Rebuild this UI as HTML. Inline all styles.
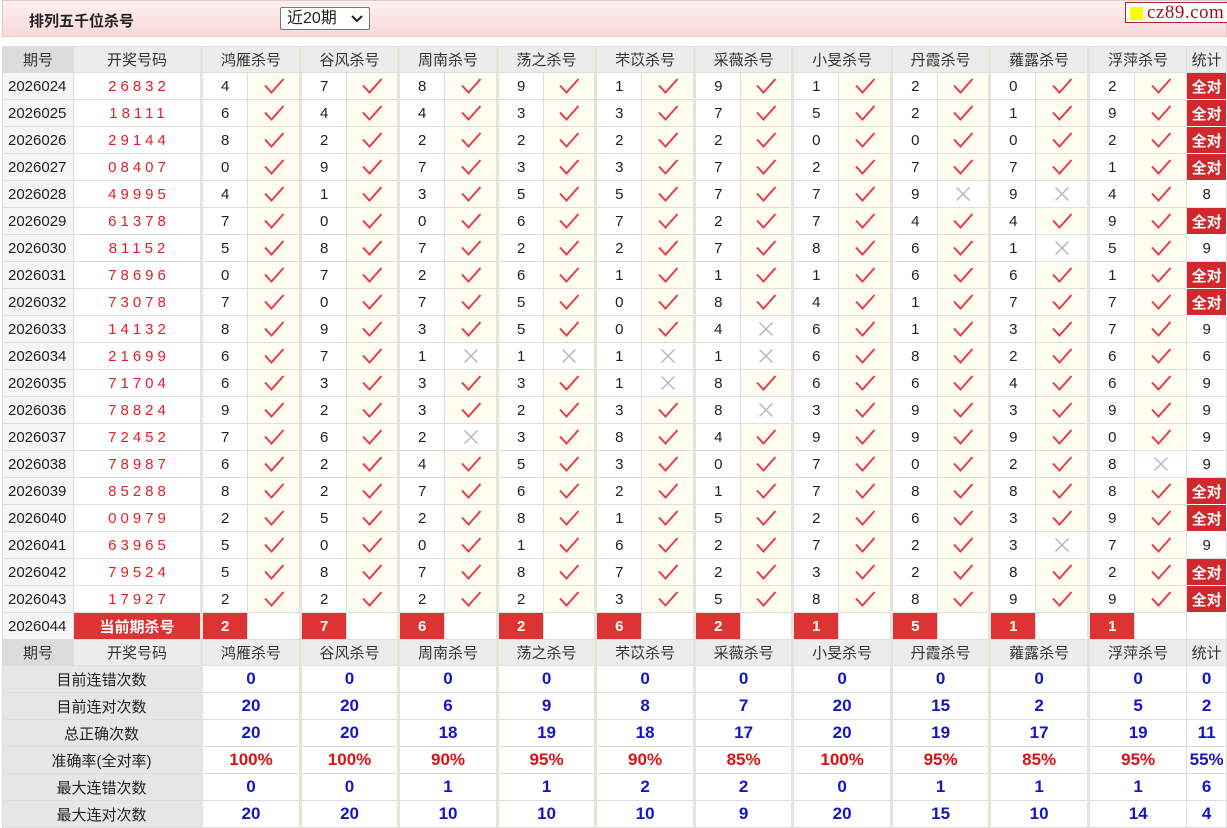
<!DOCTYPE html>
<html><head><meta charset="utf-8"><style>
*{margin:0;padding:0;box-sizing:border-box}
body{width:1227px;height:828px;overflow:hidden;background:#fff;font-family:"Liberation Sans","Noto Sans CJK SC",sans-serif;font-size:15px;color:#222}
.top{position:absolute;left:2px;top:0;width:1225px;height:37px;background:linear-gradient(#fdf0f0,#f8d9d9);border:1px solid #e3caca}
.tt{position:absolute;left:26px;top:9px;font-weight:bold;font-size:15px;color:#222}
.sel{position:absolute;left:277px;top:6px;width:90px;height:23px;background:#fff;border:1px solid #777;border-radius:2px;font-size:16px;padding-left:6px;line-height:21px}
.sel svg{position:absolute;right:6px;top:7px}
.logo{position:absolute;left:1122px;top:1px;width:103px;height:21px;background:#fff;border:1px solid #b3262e;font-family:"Liberation Serif",serif;font-size:19px;color:#a0101c;line-height:19px;padding-left:21px;letter-spacing:0.5px}
.logo:before{content:"";position:absolute;left:4px;top:4px;width:13px;height:13px;background:#ff0}
table{position:absolute;left:2px;top:46px;border-collapse:collapse;table-layout:fixed;width:1225px}
td{border:1px solid #dedede;text-align:center;height:27px;padding:0;white-space:nowrap;overflow:hidden}
tr.h td{background:#ececec;color:#333;height:26px}
tr.h td.a{background:#dcdcdc}
td.a{background:#f5f5f5;text-align:left;padding-left:5px}
tr.h td.a{text-align:center;padding:0}
td.k{color:#e0202a;letter-spacing:4px;padding-left:4px}
td.n{border-left:3px solid #e4e4dc;text-align:left;padding-left:18px}
tr.h td.g{border-left:3px solid #e4e4dc}
td.o{background:#fffdf0}
td.o svg,td.x svg{display:block;margin:0 auto}
td.q{background:#d0282c;color:#fff;font-weight:bold;border:1px solid #fff;font-size:15px}
td.cur{background:#d33;color:#fff;font-weight:bold}
td.r{background:#d33;color:#fff;font-weight:bold;text-align:left;padding-left:18px;border-left:3px solid #e4e4dc}
td.s{background:#e6e6e6;color:#222}
td.v{border-left:3px solid #e4e4dc;color:#1515c8;font-weight:bold;font-size:17px}
td.p{color:#e01010}
td.lv{color:#1515c8;font-weight:bold;font-size:17px}
</style></head><body>
<svg width="0" height="0" style="position:absolute"><defs>
<symbol id="k" viewBox="0 0 22 18"><path d="M2 8.5 L8.5 15.5 L20.5 2" fill="none" stroke="#e63c4c" stroke-width="2" stroke-linejoin="miter"/></symbol>
<symbol id="c" viewBox="0 0 16 16"><path d="M1.5 1.5 L14.5 14.5 M14.5 1.5 L1.5 14.5" fill="none" stroke="#b8b8b8" stroke-width="1.5"/></symbol>
</defs></svg>
<div class="top"><div class="tt">排列五千位杀号</div>
<div class="sel">近20期<svg width="12" height="8" viewBox="0 0 12 8"><path d="M1 1 L6 6 L11 1" fill="none" stroke="#222" stroke-width="2"/></svg></div>
<div class="logo">cz89.com</div></div>
<table>
<colgroup><col style="width:71px"><col style="width:128px">
<col style="width:46px"><col style="width:53px"><col style="width:46px"><col style="width:52px"><col style="width:46px"><col style="width:53px"><col style="width:46px"><col style="width:52px"><col style="width:46px"><col style="width:53px"><col style="width:46px"><col style="width:52px"><col style="width:46px"><col style="width:53px"><col style="width:46px"><col style="width:52px"><col style="width:46px"><col style="width:53px"><col style="width:46px"><col style="width:52px">
<col style="width:40px"></colgroup>
<tr class="h"><td class="a">期号</td><td>开奖号码</td><td class="g" colspan="2">鸿雁杀号</td><td class="g" colspan="2">谷风杀号</td><td class="g" colspan="2">周南杀号</td><td class="g" colspan="2">荡之杀号</td><td class="g" colspan="2">芣苡杀号</td><td class="g" colspan="2">采薇杀号</td><td class="g" colspan="2">小旻杀号</td><td class="g" colspan="2">丹霞杀号</td><td class="g" colspan="2">蕹露杀号</td><td class="g" colspan="2">浮萍杀号</td><td>统计</td></tr>
<tr><td class="a">2026024</td><td class="k">26832</td><td class="n">4</td><td class="o"><svg width="22" height="18"><use href="#k"/></svg></td><td class="n">7</td><td class="o"><svg width="22" height="18"><use href="#k"/></svg></td><td class="n">8</td><td class="o"><svg width="22" height="18"><use href="#k"/></svg></td><td class="n">9</td><td class="o"><svg width="22" height="18"><use href="#k"/></svg></td><td class="n">1</td><td class="o"><svg width="22" height="18"><use href="#k"/></svg></td><td class="n">9</td><td class="o"><svg width="22" height="18"><use href="#k"/></svg></td><td class="n">1</td><td class="o"><svg width="22" height="18"><use href="#k"/></svg></td><td class="n">2</td><td class="o"><svg width="22" height="18"><use href="#k"/></svg></td><td class="n">0</td><td class="o"><svg width="22" height="18"><use href="#k"/></svg></td><td class="n">2</td><td class="o"><svg width="22" height="18"><use href="#k"/></svg></td><td class="q">全对</td></tr>
<tr><td class="a">2026025</td><td class="k">18111</td><td class="n">6</td><td class="o"><svg width="22" height="18"><use href="#k"/></svg></td><td class="n">4</td><td class="o"><svg width="22" height="18"><use href="#k"/></svg></td><td class="n">4</td><td class="o"><svg width="22" height="18"><use href="#k"/></svg></td><td class="n">3</td><td class="o"><svg width="22" height="18"><use href="#k"/></svg></td><td class="n">3</td><td class="o"><svg width="22" height="18"><use href="#k"/></svg></td><td class="n">7</td><td class="o"><svg width="22" height="18"><use href="#k"/></svg></td><td class="n">5</td><td class="o"><svg width="22" height="18"><use href="#k"/></svg></td><td class="n">2</td><td class="o"><svg width="22" height="18"><use href="#k"/></svg></td><td class="n">1</td><td class="o"><svg width="22" height="18"><use href="#k"/></svg></td><td class="n">9</td><td class="o"><svg width="22" height="18"><use href="#k"/></svg></td><td class="q">全对</td></tr>
<tr><td class="a">2026026</td><td class="k">29144</td><td class="n">8</td><td class="o"><svg width="22" height="18"><use href="#k"/></svg></td><td class="n">2</td><td class="o"><svg width="22" height="18"><use href="#k"/></svg></td><td class="n">2</td><td class="o"><svg width="22" height="18"><use href="#k"/></svg></td><td class="n">2</td><td class="o"><svg width="22" height="18"><use href="#k"/></svg></td><td class="n">2</td><td class="o"><svg width="22" height="18"><use href="#k"/></svg></td><td class="n">2</td><td class="o"><svg width="22" height="18"><use href="#k"/></svg></td><td class="n">0</td><td class="o"><svg width="22" height="18"><use href="#k"/></svg></td><td class="n">0</td><td class="o"><svg width="22" height="18"><use href="#k"/></svg></td><td class="n">0</td><td class="o"><svg width="22" height="18"><use href="#k"/></svg></td><td class="n">2</td><td class="o"><svg width="22" height="18"><use href="#k"/></svg></td><td class="q">全对</td></tr>
<tr><td class="a">2026027</td><td class="k">08407</td><td class="n">0</td><td class="o"><svg width="22" height="18"><use href="#k"/></svg></td><td class="n">9</td><td class="o"><svg width="22" height="18"><use href="#k"/></svg></td><td class="n">7</td><td class="o"><svg width="22" height="18"><use href="#k"/></svg></td><td class="n">3</td><td class="o"><svg width="22" height="18"><use href="#k"/></svg></td><td class="n">3</td><td class="o"><svg width="22" height="18"><use href="#k"/></svg></td><td class="n">7</td><td class="o"><svg width="22" height="18"><use href="#k"/></svg></td><td class="n">2</td><td class="o"><svg width="22" height="18"><use href="#k"/></svg></td><td class="n">7</td><td class="o"><svg width="22" height="18"><use href="#k"/></svg></td><td class="n">7</td><td class="o"><svg width="22" height="18"><use href="#k"/></svg></td><td class="n">1</td><td class="o"><svg width="22" height="18"><use href="#k"/></svg></td><td class="q">全对</td></tr>
<tr><td class="a">2026028</td><td class="k">49995</td><td class="n">4</td><td class="o"><svg width="22" height="18"><use href="#k"/></svg></td><td class="n">1</td><td class="o"><svg width="22" height="18"><use href="#k"/></svg></td><td class="n">3</td><td class="o"><svg width="22" height="18"><use href="#k"/></svg></td><td class="n">5</td><td class="o"><svg width="22" height="18"><use href="#k"/></svg></td><td class="n">5</td><td class="o"><svg width="22" height="18"><use href="#k"/></svg></td><td class="n">7</td><td class="o"><svg width="22" height="18"><use href="#k"/></svg></td><td class="n">7</td><td class="o"><svg width="22" height="18"><use href="#k"/></svg></td><td class="n">9</td><td class="x"><svg width="16" height="16"><use href="#c"/></svg></td><td class="n">9</td><td class="x"><svg width="16" height="16"><use href="#c"/></svg></td><td class="n">4</td><td class="o"><svg width="22" height="18"><use href="#k"/></svg></td><td>8</td></tr>
<tr><td class="a">2026029</td><td class="k">61378</td><td class="n">7</td><td class="o"><svg width="22" height="18"><use href="#k"/></svg></td><td class="n">0</td><td class="o"><svg width="22" height="18"><use href="#k"/></svg></td><td class="n">0</td><td class="o"><svg width="22" height="18"><use href="#k"/></svg></td><td class="n">6</td><td class="o"><svg width="22" height="18"><use href="#k"/></svg></td><td class="n">7</td><td class="o"><svg width="22" height="18"><use href="#k"/></svg></td><td class="n">2</td><td class="o"><svg width="22" height="18"><use href="#k"/></svg></td><td class="n">7</td><td class="o"><svg width="22" height="18"><use href="#k"/></svg></td><td class="n">4</td><td class="o"><svg width="22" height="18"><use href="#k"/></svg></td><td class="n">4</td><td class="o"><svg width="22" height="18"><use href="#k"/></svg></td><td class="n">9</td><td class="o"><svg width="22" height="18"><use href="#k"/></svg></td><td class="q">全对</td></tr>
<tr><td class="a">2026030</td><td class="k">81152</td><td class="n">5</td><td class="o"><svg width="22" height="18"><use href="#k"/></svg></td><td class="n">8</td><td class="o"><svg width="22" height="18"><use href="#k"/></svg></td><td class="n">7</td><td class="o"><svg width="22" height="18"><use href="#k"/></svg></td><td class="n">2</td><td class="o"><svg width="22" height="18"><use href="#k"/></svg></td><td class="n">2</td><td class="o"><svg width="22" height="18"><use href="#k"/></svg></td><td class="n">7</td><td class="o"><svg width="22" height="18"><use href="#k"/></svg></td><td class="n">8</td><td class="o"><svg width="22" height="18"><use href="#k"/></svg></td><td class="n">6</td><td class="o"><svg width="22" height="18"><use href="#k"/></svg></td><td class="n">1</td><td class="x"><svg width="16" height="16"><use href="#c"/></svg></td><td class="n">5</td><td class="o"><svg width="22" height="18"><use href="#k"/></svg></td><td>9</td></tr>
<tr><td class="a">2026031</td><td class="k">78696</td><td class="n">0</td><td class="o"><svg width="22" height="18"><use href="#k"/></svg></td><td class="n">7</td><td class="o"><svg width="22" height="18"><use href="#k"/></svg></td><td class="n">2</td><td class="o"><svg width="22" height="18"><use href="#k"/></svg></td><td class="n">6</td><td class="o"><svg width="22" height="18"><use href="#k"/></svg></td><td class="n">1</td><td class="o"><svg width="22" height="18"><use href="#k"/></svg></td><td class="n">1</td><td class="o"><svg width="22" height="18"><use href="#k"/></svg></td><td class="n">1</td><td class="o"><svg width="22" height="18"><use href="#k"/></svg></td><td class="n">6</td><td class="o"><svg width="22" height="18"><use href="#k"/></svg></td><td class="n">6</td><td class="o"><svg width="22" height="18"><use href="#k"/></svg></td><td class="n">1</td><td class="o"><svg width="22" height="18"><use href="#k"/></svg></td><td class="q">全对</td></tr>
<tr><td class="a">2026032</td><td class="k">73078</td><td class="n">7</td><td class="o"><svg width="22" height="18"><use href="#k"/></svg></td><td class="n">0</td><td class="o"><svg width="22" height="18"><use href="#k"/></svg></td><td class="n">7</td><td class="o"><svg width="22" height="18"><use href="#k"/></svg></td><td class="n">5</td><td class="o"><svg width="22" height="18"><use href="#k"/></svg></td><td class="n">0</td><td class="o"><svg width="22" height="18"><use href="#k"/></svg></td><td class="n">8</td><td class="o"><svg width="22" height="18"><use href="#k"/></svg></td><td class="n">4</td><td class="o"><svg width="22" height="18"><use href="#k"/></svg></td><td class="n">1</td><td class="o"><svg width="22" height="18"><use href="#k"/></svg></td><td class="n">7</td><td class="o"><svg width="22" height="18"><use href="#k"/></svg></td><td class="n">7</td><td class="o"><svg width="22" height="18"><use href="#k"/></svg></td><td class="q">全对</td></tr>
<tr><td class="a">2026033</td><td class="k">14132</td><td class="n">8</td><td class="o"><svg width="22" height="18"><use href="#k"/></svg></td><td class="n">9</td><td class="o"><svg width="22" height="18"><use href="#k"/></svg></td><td class="n">3</td><td class="o"><svg width="22" height="18"><use href="#k"/></svg></td><td class="n">5</td><td class="o"><svg width="22" height="18"><use href="#k"/></svg></td><td class="n">0</td><td class="o"><svg width="22" height="18"><use href="#k"/></svg></td><td class="n">4</td><td class="x"><svg width="16" height="16"><use href="#c"/></svg></td><td class="n">6</td><td class="o"><svg width="22" height="18"><use href="#k"/></svg></td><td class="n">1</td><td class="o"><svg width="22" height="18"><use href="#k"/></svg></td><td class="n">3</td><td class="o"><svg width="22" height="18"><use href="#k"/></svg></td><td class="n">7</td><td class="o"><svg width="22" height="18"><use href="#k"/></svg></td><td>9</td></tr>
<tr><td class="a">2026034</td><td class="k">21699</td><td class="n">6</td><td class="o"><svg width="22" height="18"><use href="#k"/></svg></td><td class="n">7</td><td class="o"><svg width="22" height="18"><use href="#k"/></svg></td><td class="n">1</td><td class="x"><svg width="16" height="16"><use href="#c"/></svg></td><td class="n">1</td><td class="x"><svg width="16" height="16"><use href="#c"/></svg></td><td class="n">1</td><td class="x"><svg width="16" height="16"><use href="#c"/></svg></td><td class="n">1</td><td class="x"><svg width="16" height="16"><use href="#c"/></svg></td><td class="n">6</td><td class="o"><svg width="22" height="18"><use href="#k"/></svg></td><td class="n">8</td><td class="o"><svg width="22" height="18"><use href="#k"/></svg></td><td class="n">2</td><td class="o"><svg width="22" height="18"><use href="#k"/></svg></td><td class="n">6</td><td class="o"><svg width="22" height="18"><use href="#k"/></svg></td><td>6</td></tr>
<tr><td class="a">2026035</td><td class="k">71704</td><td class="n">6</td><td class="o"><svg width="22" height="18"><use href="#k"/></svg></td><td class="n">3</td><td class="o"><svg width="22" height="18"><use href="#k"/></svg></td><td class="n">3</td><td class="o"><svg width="22" height="18"><use href="#k"/></svg></td><td class="n">3</td><td class="o"><svg width="22" height="18"><use href="#k"/></svg></td><td class="n">1</td><td class="x"><svg width="16" height="16"><use href="#c"/></svg></td><td class="n">8</td><td class="o"><svg width="22" height="18"><use href="#k"/></svg></td><td class="n">6</td><td class="o"><svg width="22" height="18"><use href="#k"/></svg></td><td class="n">6</td><td class="o"><svg width="22" height="18"><use href="#k"/></svg></td><td class="n">4</td><td class="o"><svg width="22" height="18"><use href="#k"/></svg></td><td class="n">6</td><td class="o"><svg width="22" height="18"><use href="#k"/></svg></td><td>9</td></tr>
<tr><td class="a">2026036</td><td class="k">78824</td><td class="n">9</td><td class="o"><svg width="22" height="18"><use href="#k"/></svg></td><td class="n">2</td><td class="o"><svg width="22" height="18"><use href="#k"/></svg></td><td class="n">3</td><td class="o"><svg width="22" height="18"><use href="#k"/></svg></td><td class="n">2</td><td class="o"><svg width="22" height="18"><use href="#k"/></svg></td><td class="n">3</td><td class="o"><svg width="22" height="18"><use href="#k"/></svg></td><td class="n">8</td><td class="x"><svg width="16" height="16"><use href="#c"/></svg></td><td class="n">3</td><td class="o"><svg width="22" height="18"><use href="#k"/></svg></td><td class="n">9</td><td class="o"><svg width="22" height="18"><use href="#k"/></svg></td><td class="n">3</td><td class="o"><svg width="22" height="18"><use href="#k"/></svg></td><td class="n">9</td><td class="o"><svg width="22" height="18"><use href="#k"/></svg></td><td>9</td></tr>
<tr><td class="a">2026037</td><td class="k">72452</td><td class="n">7</td><td class="o"><svg width="22" height="18"><use href="#k"/></svg></td><td class="n">6</td><td class="o"><svg width="22" height="18"><use href="#k"/></svg></td><td class="n">2</td><td class="x"><svg width="16" height="16"><use href="#c"/></svg></td><td class="n">3</td><td class="o"><svg width="22" height="18"><use href="#k"/></svg></td><td class="n">8</td><td class="o"><svg width="22" height="18"><use href="#k"/></svg></td><td class="n">4</td><td class="o"><svg width="22" height="18"><use href="#k"/></svg></td><td class="n">9</td><td class="o"><svg width="22" height="18"><use href="#k"/></svg></td><td class="n">9</td><td class="o"><svg width="22" height="18"><use href="#k"/></svg></td><td class="n">9</td><td class="o"><svg width="22" height="18"><use href="#k"/></svg></td><td class="n">0</td><td class="o"><svg width="22" height="18"><use href="#k"/></svg></td><td>9</td></tr>
<tr><td class="a">2026038</td><td class="k">78987</td><td class="n">6</td><td class="o"><svg width="22" height="18"><use href="#k"/></svg></td><td class="n">2</td><td class="o"><svg width="22" height="18"><use href="#k"/></svg></td><td class="n">4</td><td class="o"><svg width="22" height="18"><use href="#k"/></svg></td><td class="n">5</td><td class="o"><svg width="22" height="18"><use href="#k"/></svg></td><td class="n">3</td><td class="o"><svg width="22" height="18"><use href="#k"/></svg></td><td class="n">0</td><td class="o"><svg width="22" height="18"><use href="#k"/></svg></td><td class="n">7</td><td class="o"><svg width="22" height="18"><use href="#k"/></svg></td><td class="n">0</td><td class="o"><svg width="22" height="18"><use href="#k"/></svg></td><td class="n">2</td><td class="o"><svg width="22" height="18"><use href="#k"/></svg></td><td class="n">8</td><td class="x"><svg width="16" height="16"><use href="#c"/></svg></td><td>9</td></tr>
<tr><td class="a">2026039</td><td class="k">85288</td><td class="n">8</td><td class="o"><svg width="22" height="18"><use href="#k"/></svg></td><td class="n">2</td><td class="o"><svg width="22" height="18"><use href="#k"/></svg></td><td class="n">7</td><td class="o"><svg width="22" height="18"><use href="#k"/></svg></td><td class="n">6</td><td class="o"><svg width="22" height="18"><use href="#k"/></svg></td><td class="n">2</td><td class="o"><svg width="22" height="18"><use href="#k"/></svg></td><td class="n">1</td><td class="o"><svg width="22" height="18"><use href="#k"/></svg></td><td class="n">7</td><td class="o"><svg width="22" height="18"><use href="#k"/></svg></td><td class="n">8</td><td class="o"><svg width="22" height="18"><use href="#k"/></svg></td><td class="n">8</td><td class="o"><svg width="22" height="18"><use href="#k"/></svg></td><td class="n">8</td><td class="o"><svg width="22" height="18"><use href="#k"/></svg></td><td class="q">全对</td></tr>
<tr><td class="a">2026040</td><td class="k">00979</td><td class="n">2</td><td class="o"><svg width="22" height="18"><use href="#k"/></svg></td><td class="n">5</td><td class="o"><svg width="22" height="18"><use href="#k"/></svg></td><td class="n">2</td><td class="o"><svg width="22" height="18"><use href="#k"/></svg></td><td class="n">8</td><td class="o"><svg width="22" height="18"><use href="#k"/></svg></td><td class="n">1</td><td class="o"><svg width="22" height="18"><use href="#k"/></svg></td><td class="n">5</td><td class="o"><svg width="22" height="18"><use href="#k"/></svg></td><td class="n">2</td><td class="o"><svg width="22" height="18"><use href="#k"/></svg></td><td class="n">6</td><td class="o"><svg width="22" height="18"><use href="#k"/></svg></td><td class="n">3</td><td class="o"><svg width="22" height="18"><use href="#k"/></svg></td><td class="n">9</td><td class="o"><svg width="22" height="18"><use href="#k"/></svg></td><td class="q">全对</td></tr>
<tr><td class="a">2026041</td><td class="k">63965</td><td class="n">5</td><td class="o"><svg width="22" height="18"><use href="#k"/></svg></td><td class="n">0</td><td class="o"><svg width="22" height="18"><use href="#k"/></svg></td><td class="n">0</td><td class="o"><svg width="22" height="18"><use href="#k"/></svg></td><td class="n">1</td><td class="o"><svg width="22" height="18"><use href="#k"/></svg></td><td class="n">6</td><td class="o"><svg width="22" height="18"><use href="#k"/></svg></td><td class="n">2</td><td class="o"><svg width="22" height="18"><use href="#k"/></svg></td><td class="n">7</td><td class="o"><svg width="22" height="18"><use href="#k"/></svg></td><td class="n">2</td><td class="o"><svg width="22" height="18"><use href="#k"/></svg></td><td class="n">3</td><td class="x"><svg width="16" height="16"><use href="#c"/></svg></td><td class="n">7</td><td class="o"><svg width="22" height="18"><use href="#k"/></svg></td><td>9</td></tr>
<tr><td class="a">2026042</td><td class="k">79524</td><td class="n">5</td><td class="o"><svg width="22" height="18"><use href="#k"/></svg></td><td class="n">8</td><td class="o"><svg width="22" height="18"><use href="#k"/></svg></td><td class="n">7</td><td class="o"><svg width="22" height="18"><use href="#k"/></svg></td><td class="n">8</td><td class="o"><svg width="22" height="18"><use href="#k"/></svg></td><td class="n">7</td><td class="o"><svg width="22" height="18"><use href="#k"/></svg></td><td class="n">2</td><td class="o"><svg width="22" height="18"><use href="#k"/></svg></td><td class="n">3</td><td class="o"><svg width="22" height="18"><use href="#k"/></svg></td><td class="n">2</td><td class="o"><svg width="22" height="18"><use href="#k"/></svg></td><td class="n">8</td><td class="o"><svg width="22" height="18"><use href="#k"/></svg></td><td class="n">2</td><td class="o"><svg width="22" height="18"><use href="#k"/></svg></td><td class="q">全对</td></tr>
<tr><td class="a">2026043</td><td class="k">17927</td><td class="n">2</td><td class="o"><svg width="22" height="18"><use href="#k"/></svg></td><td class="n">2</td><td class="o"><svg width="22" height="18"><use href="#k"/></svg></td><td class="n">2</td><td class="o"><svg width="22" height="18"><use href="#k"/></svg></td><td class="n">2</td><td class="o"><svg width="22" height="18"><use href="#k"/></svg></td><td class="n">3</td><td class="o"><svg width="22" height="18"><use href="#k"/></svg></td><td class="n">5</td><td class="o"><svg width="22" height="18"><use href="#k"/></svg></td><td class="n">8</td><td class="o"><svg width="22" height="18"><use href="#k"/></svg></td><td class="n">8</td><td class="o"><svg width="22" height="18"><use href="#k"/></svg></td><td class="n">9</td><td class="o"><svg width="22" height="18"><use href="#k"/></svg></td><td class="n">9</td><td class="o"><svg width="22" height="18"><use href="#k"/></svg></td><td class="q">全对</td></tr>
<tr><td class="a">2026044</td><td class="cur">当前期杀号</td><td class="r">2</td><td></td><td class="r">7</td><td></td><td class="r">6</td><td></td><td class="r">2</td><td></td><td class="r">6</td><td></td><td class="r">2</td><td></td><td class="r">1</td><td></td><td class="r">5</td><td></td><td class="r">1</td><td></td><td class="r">1</td><td></td><td></td></tr>
<tr class="h"><td class="a">期号</td><td>开奖号码</td><td class="g" colspan="2">鸿雁杀号</td><td class="g" colspan="2">谷风杀号</td><td class="g" colspan="2">周南杀号</td><td class="g" colspan="2">荡之杀号</td><td class="g" colspan="2">芣苡杀号</td><td class="g" colspan="2">采薇杀号</td><td class="g" colspan="2">小旻杀号</td><td class="g" colspan="2">丹霞杀号</td><td class="g" colspan="2">蕹露杀号</td><td class="g" colspan="2">浮萍杀号</td><td>统计</td></tr>
<tr><td class="s" colspan="2">目前连错次数</td><td class="v" colspan="2">0</td><td class="v" colspan="2">0</td><td class="v" colspan="2">0</td><td class="v" colspan="2">0</td><td class="v" colspan="2">0</td><td class="v" colspan="2">0</td><td class="v" colspan="2">0</td><td class="v" colspan="2">0</td><td class="v" colspan="2">0</td><td class="v" colspan="2">0</td><td class="lv">0</td></tr>
<tr><td class="s" colspan="2">目前连对次数</td><td class="v" colspan="2">20</td><td class="v" colspan="2">20</td><td class="v" colspan="2">6</td><td class="v" colspan="2">9</td><td class="v" colspan="2">8</td><td class="v" colspan="2">7</td><td class="v" colspan="2">20</td><td class="v" colspan="2">15</td><td class="v" colspan="2">2</td><td class="v" colspan="2">5</td><td class="lv">2</td></tr>
<tr><td class="s" colspan="2">总正确次数</td><td class="v" colspan="2">20</td><td class="v" colspan="2">20</td><td class="v" colspan="2">18</td><td class="v" colspan="2">19</td><td class="v" colspan="2">18</td><td class="v" colspan="2">17</td><td class="v" colspan="2">20</td><td class="v" colspan="2">19</td><td class="v" colspan="2">17</td><td class="v" colspan="2">19</td><td class="lv">11</td></tr>
<tr><td class="s" colspan="2">准确率(全对率)</td><td class="v p" colspan="2">100%</td><td class="v p" colspan="2">100%</td><td class="v p" colspan="2">90%</td><td class="v p" colspan="2">95%</td><td class="v p" colspan="2">90%</td><td class="v p" colspan="2">85%</td><td class="v p" colspan="2">100%</td><td class="v p" colspan="2">95%</td><td class="v p" colspan="2">85%</td><td class="v p" colspan="2">95%</td><td class="lv p">55%</td></tr>
<tr><td class="s" colspan="2">最大连错次数</td><td class="v" colspan="2">0</td><td class="v" colspan="2">0</td><td class="v" colspan="2">1</td><td class="v" colspan="2">1</td><td class="v" colspan="2">2</td><td class="v" colspan="2">2</td><td class="v" colspan="2">0</td><td class="v" colspan="2">1</td><td class="v" colspan="2">1</td><td class="v" colspan="2">1</td><td class="lv">6</td></tr>
<tr><td class="s" colspan="2">最大连对次数</td><td class="v" colspan="2">20</td><td class="v" colspan="2">20</td><td class="v" colspan="2">10</td><td class="v" colspan="2">10</td><td class="v" colspan="2">10</td><td class="v" colspan="2">9</td><td class="v" colspan="2">20</td><td class="v" colspan="2">15</td><td class="v" colspan="2">10</td><td class="v" colspan="2">14</td><td class="lv">4</td></tr>
</table>
</body></html>
